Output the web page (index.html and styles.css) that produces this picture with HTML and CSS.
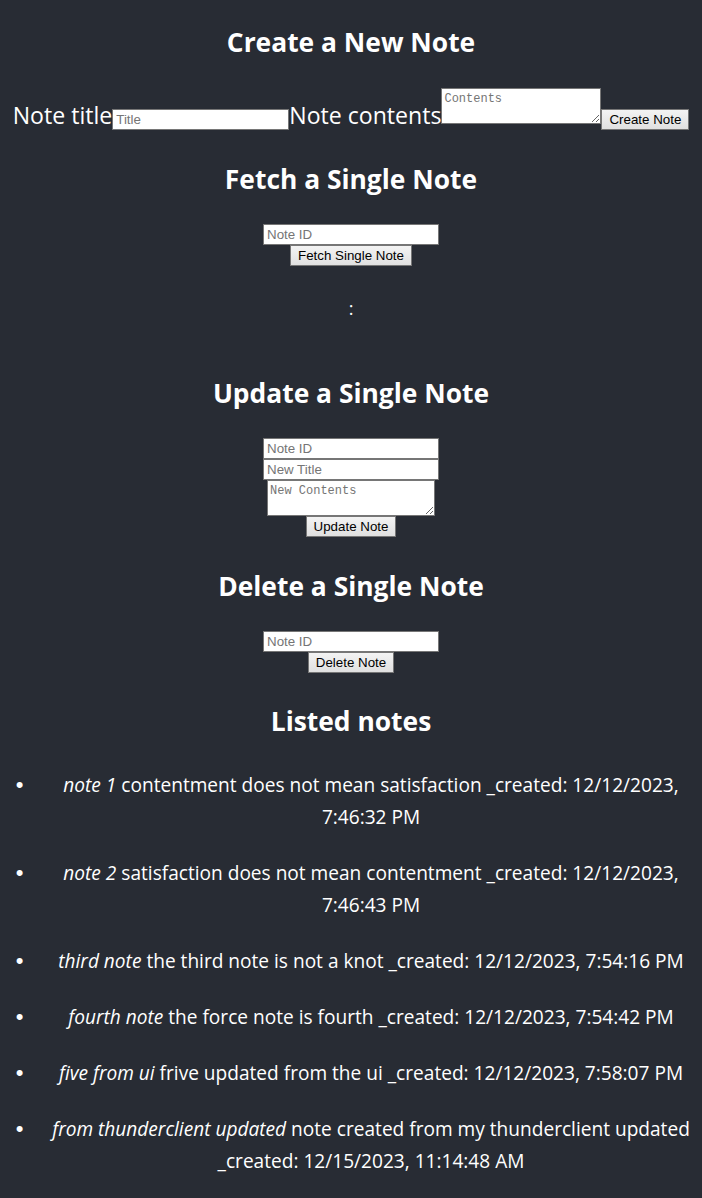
FILE: index.html
```html
<!DOCTYPE html>
<html lang="en">
<head>
<meta charset="utf-8">
<title>Notes</title>
<link rel="stylesheet" href="styles.css">
</head>
<body>
<div class="app">
  <h2 class="heading heading-first">Create a New Note</h2>
  <form class="create-form"><label class="field-label">Note title<input class="text-input text-input-wide" type="text" placeholder="Title"></label><label class="field-label">Note contents<textarea class="text-area text-area-create" placeholder="Contents"></textarea></label><button class="btn" type="button">Create Note</button></form>

  <h2 class="heading">Fetch a Single Note</h2>
  <form class="stack-form">
    <input class="text-input" type="text" placeholder="Note ID">
    <button class="btn" type="button">Fetch Single Note</button>
  </form>
  <p class="fetched">:</p>

  <h2 class="heading">Update a Single Note</h2>
  <form class="stack-form">
    <input class="text-input" type="text" placeholder="Note ID">
    <input class="text-input" type="text" placeholder="New Title">
    <textarea class="text-area text-area-update" placeholder="New Contents"></textarea>
    <button class="btn" type="button">Update Note</button>
  </form>

  <h2 class="heading">Delete a Single Note</h2>
  <form class="stack-form">
    <input class="text-input" type="text" placeholder="Note ID">
    <button class="btn" type="button">Delete Note</button>
  </form>

  <h2 class="heading heading-last">Listed notes</h2>
  <ul class="notes">
    <li><em>note 1</em> contentment does not mean satisfaction _created: 12/12/2023, 7:46:32 PM</li>
    <li><em>note 2</em> satisfaction does not mean contentment _created: 12/12/2023, 7:46:43 PM</li>
    <li><em>third note</em> the third note is not a knot _created: 12/12/2023, 7:54:16 PM</li>
    <li><em>fourth note</em> the force note is fourth _created: 12/12/2023, 7:54:42 PM</li>
    <li><em>five from ui</em> frive updated from the ui _created: 12/12/2023, 7:58:07 PM</li>
    <li><em>from thunderclient updated</em> note created from my thunderclient updated _created: 12/15/2023, 11:14:48 AM</li>
  </ul>
</div>
</body>
</html>
```
FILE: styles.css
```css
html {
  background: #282c34;
}

body {
  margin: 0;
  background: #282c34;
}

.app {
  text-align: center;
  color: #ffffff;
  font-family: "Open Sans", "Noto Sans", sans-serif;
  padding-bottom: 20px;
}

.heading {
  font-size: 26.4px;
  font-weight: 700;
  line-height: 36px;
  margin: 31px 0 27px;
}

.heading-first {
  margin: 24px 0 28px;
}

.heading-last {
  margin-top: 30px;
}

.create-form {
  margin: 0;
  font-size: 23.1px;
  line-height: 26px;
}

.field-label {
  vertical-align: baseline;
}

.text-input {
  box-sizing: border-box;
  width: 176px;
  height: 21px;
  margin: 0;
  padding: 1px 3px;
  border: 1px solid #767676;
  border-radius: 0;
  background: #ffffff;
  color: #000000;
  font-family: "Liberation Sans", Arial, sans-serif;
  font-size: 13.33px;
  vertical-align: baseline;
}

.text-input-wide {
  width: 177px;
}

.text-input::placeholder,
.text-area::placeholder {
  color: #757575;
  opacity: 1;
}

.text-area {
  box-sizing: border-box;
  height: 36px;
  margin: 0;
  padding: 3px 2px 2px;
  border: 1px solid #767676;
  border-radius: 0;
  background: #ffffff;
  font-family: "Liberation Mono", monospace;
  font-size: 12px;
  vertical-align: baseline;
}

.text-area-create {
  width: 160px;
}

.text-area-update {
  width: 168px;
}

.btn {
  box-sizing: border-box;
  height: 21px;
  margin: 0;
  padding: 1px 7px;
  border: 1px solid #767676;
  border-radius: 0;
  background: linear-gradient(#f3f3f3, #e0e0e0);
  color: #000000;
  font-family: "Liberation Sans", Arial, sans-serif;
  font-size: 13.33px;
  line-height: 15px;
  vertical-align: baseline;
}

.stack-form {
  margin: 0;
  display: flex;
  flex-direction: column;
  align-items: center;
}

.fetched {
  margin: 30px 0 55px;
  font-size: 18px;
  line-height: 24px;
}

.notes {
  margin: 30px 0 0;
  padding-left: 40px;
  font-size: 19.1px;
  line-height: 32px;
}

.notes li::marker {
  content: "\2022\2002\2005";
  font-family: "Liberation Sans", sans-serif;
  font-size: 22px;
}

.notes li + li {
  margin-top: 24px;
}
```
